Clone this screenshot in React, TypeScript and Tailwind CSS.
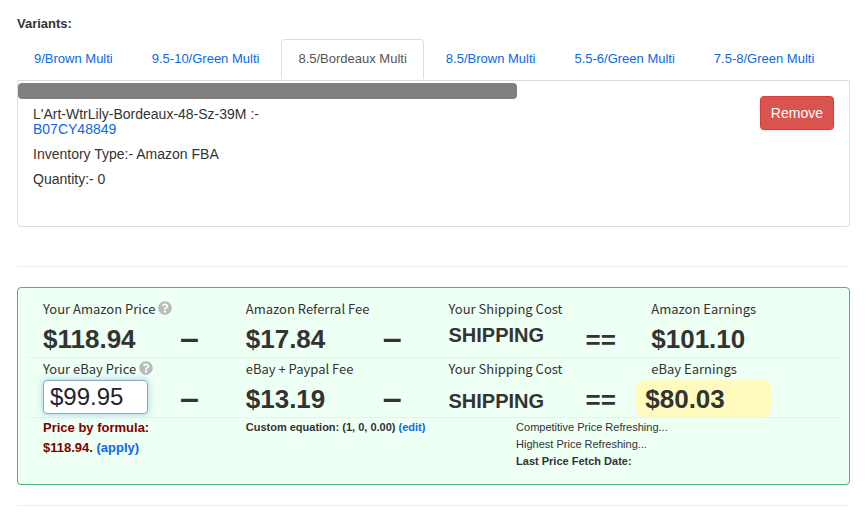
import { useState } from "react";
import { FaQuestionCircle } from "react-icons/fa";

const variants = [
  "9/Brown Multi",
  "9.5-10/Green Multi",
  "8.5/Bordeaux Multi",
  "8.5/Brown Multi",
  "5.5-6/Green Multi",
  "7.5-8/Green Multi",
];

const labelFont = "font-['Noto_Sans_CJK_SC',sans-serif]";

function HelpButton({ label }: { label: string }) {
  return (
    <button type="button" aria-label={label} className="ml-[3px] mb-0.5 text-[#bbbbbb]">
      <FaQuestionCircle size={14} />
    </button>
  );
}

function Cell({ label, help, htmlFor, operator, children }: any) {
  return (
    <div>
      <div className={`flex h-[22px] items-center pl-[15px] text-[13px] leading-[22px] ${labelFont}`}>
        {htmlFor ? <label htmlFor={htmlFor}>{label}</label> : <span>{label}</span>}
        {help && <HelpButton label={help} />}
      </div>
      <div className="flex h-[37px]">
        <div className="flex w-3/4 pl-[15px] text-[26px] leading-[38px] font-bold">{children}</div>
        {operator === "minus" && <span className="text-[34px] leading-[35px] font-bold">–</span>}
        {operator === "equals" && <span className="text-[26px] leading-[40px] font-bold">==</span>}
      </div>
    </div>
  );
}

export default function App() {
  const [active, setActive] = useState(2);
  const [ebayPrice, setEbayPrice] = useState("$99.95");

  return (
    <main className="bg-white px-[17px] pb-4 pr-[15px] pt-3.5 font-['Liberation_Sans',Arial,sans-serif] text-[13px] text-[#333333]">
      <h2 className="text-[13px] leading-5 font-bold">Variants:</h2>

      <div role="tablist" className="mt-[5px] flex gap-[5px]">
        {variants.map((name, i) => (
          <button
            key={name}
            type="button"
            role="tab"
            id={`variant-tab-${i}`}
            aria-selected={active === i}
            aria-controls="variant-panel"
            onClick={() => setActive(i)}
            className={`h-10 rounded-t border border-b-0 px-4 pb-0.5 leading-5 whitespace-nowrap ${
              active === i ? "border-[#dddddd] text-[#555555]" : "border-transparent text-[#0d67e6]"
            }`}
          >
            {name}
          </button>
        ))}
      </div>

      <section
        id="variant-panel"
        role="tabpanel"
        aria-labelledby={`variant-tab-${active}`}
        className="mt-px min-h-[147px] rounded-b border border-[#dddddd] pt-0.5"
      >
        <div className="h-4 w-[60%] rounded bg-[#808080]" />
        <div className="flex items-start justify-between pr-[15px] pl-[15px]">
          <div className="pt-2 text-[14px] leading-[15px]">
            <p>L'Art-WtrLily-Bordeaux-48-Sz-39M :-</p>
            <p>
              <a href="#product" className="text-[#0d67e6]">
                B07CY48849
              </a>
            </p>
            <p className="mt-2.5">Inventory Type:- Amazon FBA</p>
            <p className="mt-2.5">Quantity:- 0</p>
          </div>
          <button
            type="button"
            className="-mt-[3px] rounded border border-[#d43f3a] bg-[#d9534f] px-2.5 py-1.5 text-[14px] leading-5 text-white shadow"
          >
            Remove
          </button>
        </div>
      </section>

      <hr className="mt-[39px] border-[#eeeeee]" />

      <section className="mt-5 rounded border border-[#48b97b] bg-[#eefff4] px-2.5 pt-2.5 pb-3.5">
        <div className="grid grid-cols-4 border-b border-[#eeeeee]">
          <Cell label="Your Amazon Price" help="About your Amazon price" operator="minus">
            $118.94
          </Cell>
          <Cell label="Amazon Referral Fee" operator="minus">
            $17.84
          </Cell>
          <Cell label="Your Shipping Cost" operator="equals">
            <span className="text-[20px] leading-[30px]">SHIPPING</span>
          </Cell>
          <Cell label="Amazon Earnings">$101.10</Cell>
        </div>

        <div className="grid grid-cols-4 border-b border-[#eeeeee]">
          <Cell
            label="Your eBay Price"
            help="About your eBay price"
            htmlFor="ebay-price"
            operator="minus"
          >
            <input
              id="ebay-price"
              type="text"
              value={ebayPrice}
              onChange={(e) => setEbayPrice(e.target.value)}
              className="h-[34px] w-[105px] rounded border border-[#8fa9c4] bg-white px-1.5 text-[24px] font-normal text-[#1f2430] shadow-[0_0_6px_rgba(102,175,233,0.6)] outline-none"
            />
          </Cell>
          <Cell label="eBay + Paypal Fee" operator="minus">
            $13.19
          </Cell>
          <Cell label="Your Shipping Cost" operator="equals">
            <span className="text-[20px] leading-[42px]">SHIPPING</span>
          </Cell>
          <div>
            <div className={`h-[22px] pl-[15px] text-[13px] leading-[22px] ${labelFont}`}>eBay Earnings</div>
            <div className="h-[37px] w-2/3 rounded-lg bg-[#fffbbf] pl-[9px] text-[26px] leading-[38px] font-bold">
              $80.03
            </div>
          </div>
        </div>

        <div className="grid grid-cols-12">
          <div className="col-span-3 pl-[15px] text-[13px] leading-5 font-bold text-[#800000]">
            <p>Price by formula:</p>
            <p>
              $118.94.{" "}
              <a href="#apply" className="text-[#0d67e6]">
                (apply)
              </a>
            </p>
          </div>
          <p className="col-span-4 pl-[15px] text-[11px] leading-[19px] font-bold">
            Custom equation: (1, 0, 0.00){" "}
            <a href="#edit" className="text-[#0d67e6]">
              (edit)
            </a>
          </p>
          <div className="col-span-5 pt-px pl-[15px] text-[11px] leading-[17px]">
            <p>Competitive Price Refreshing...</p>
            <p>Highest Price Refreshing...</p>
            <p className="font-bold">Last Price Fetch Date:</p>
          </div>
        </div>
      </section>

      <hr className="mt-5 border-[#eeeeee]" />
    </main>
  );
}
